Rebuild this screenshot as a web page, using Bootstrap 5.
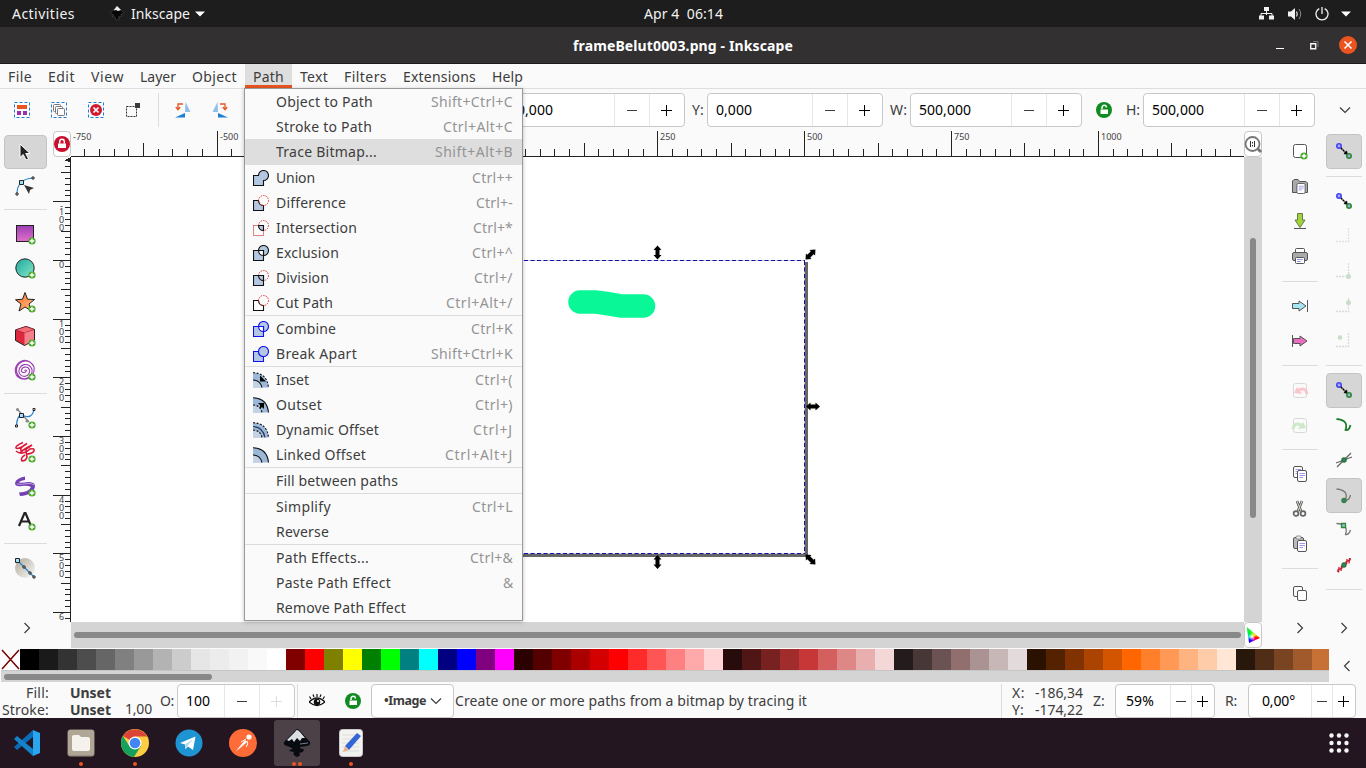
<!DOCTYPE html>
<html lang="en">
<head>
<meta charset="utf-8">
<title>frameBelut0003.png - Inkscape</title>
<link rel="stylesheet" href="https://cdn.jsdelivr.net/npm/bootstrap@5.3.0/dist/css/bootstrap.min.css">
<style>
html,body{width:1366px;height:768px;overflow:hidden}
body{font:14px/20px "Noto Sans","Open Sans",sans-serif;color:#3d3d3d;background:#fafafa}
svg{display:block;flex:none}
.fit{display:inline-block;white-space:pre;flex:none}
.topbar{height:27px;background:#1d1d1d;color:#f2f2f2}
.titlebar{height:37px;background:#323031;border-bottom:1px solid #1c1b1b;color:#fff;font-weight:700}
.menus{height:25px;border-bottom:1px solid #dedede}
.menus>div{padding:3px 0 0 8px;height:24px}
.menus>.open{background:#dedede;border-bottom:3px solid #e95420}
.tools{height:42px}
.vline{width:1px;background:#dcdcdc;flex:none}
.hline{height:1px;background:#dcdcdc}
.spin{height:34px;border:1px solid #c8c8c8;border-radius:4px;background:#fff;color:#000;flex:none}
.spin>span:first-child{flex:1;padding-left:8px}
.spin>i{border-left:1px solid #e6e6e6;height:32px;display:flex;align-items:center;justify-content:center}
.work{height:517px}
.toolbox{width:53px;padding:4px 6px 0 4px}
.toolbox .cell{height:34px}
.toolbox .cell>svg,.gut .cell>svg{margin:-1px 1px 0 0}
.gut .cell>svg{margin-right:0}
.pressed{background:#d6d6d6;border:1px solid #c4c4c4;border-radius:4px}
.gut{width:36px}
.gut .cell{height:35px}
.gap14{height:14px;display:flex;flex-direction:column;justify-content:center}
.gap15{height:15px;display:flex;flex-direction:column;justify-content:center}
.gap14 .hline{margin-top:-1px}
.doc{display:grid;grid-template-columns:18px 1173px 18px;grid-template-rows:26px 465px 26px;width:1209px}
.mini{background:#fff;border:1px solid #c8c8c8;border-radius:4px}
.trough{background:#d4d4d4}
.thumb{background:#888;border-radius:3px}
.rul{font-size:9px;fill:#444}
.pathmenu{position:absolute;left:244px;top:88px;width:279px;height:533px;background:#fafafa;border:1px solid #999;box-shadow:0 1px 4px rgba(0,0,0,.25);z-index:5}
.entry{height:25px;padding:0 9px 0 8px}
.entry .pic{width:16px;margin-right:7px;flex:none}
.entry .key{color:#949494;margin-left:auto}
.entry.hot{background:#dedede;height:26px}
.palette{height:35px}
.swatches{width:1328px;height:22px;overflow:hidden;margin:1px 0 0 1px}
.swatches>b{width:19px;flex:none;height:21px}
.status{height:35px}
.dock{height:50px;background:#241621}
.app{width:54px;height:50px;position:relative}
.app.on::before{content:"";position:absolute;left:4px;top:2px;width:46px;height:46px;border-radius:3px;background:#4d4148}
.app svg{position:relative}
.pips{position:absolute;bottom:2px;left:0;right:0;gap:2px}
.pips i{width:4px;height:4px;border-radius:50%;background:#e95420}
</style>
</head>
<body>
<svg width="0" height="0" class="position-absolute">
<defs>
<linearGradient id="gp" x1="0" y1="0" x2="0" y2="1"><stop stop-color="#9c3fb4"/><stop offset="1" stop-color="#e070c8"/></linearGradient>
<linearGradient id="gt" x1="0" y1="0" x2="1" y2="1"><stop stop-color="#1fa79c"/><stop offset="1" stop-color="#86e8ca"/></linearGradient>
<linearGradient id="go" x1="0" y1="0" x2="1" y2="1"><stop stop-color="#ff6a2c"/><stop offset="1" stop-color="#ffc27d"/></linearGradient>
<linearGradient id="gg" x1="0" y1="0" x2="1" y2="1"><stop stop-color="#b0a898"/><stop offset="1" stop-color="#fafafa"/></linearGradient>
<symbol id="plus" viewBox="0 0 8 8"><circle cx="4" cy="4" r="3.6" fill="#4aa82a"/><path d="M4 1.7V6.3M1.7 4H6.3" stroke="#fff" stroke-width="1.4"/></symbol>
<symbol id="minus" viewBox="0 0 12 12"><path d="M1 6.5H11" stroke="#3d3d3d"/></symbol>
<symbol id="add" viewBox="0 0 12 12"><path d="M0 6.500H11M5.500 1V12" stroke="currentColor"/></symbol>
<symbol id="unlock" viewBox="0 0 16 16"><circle cx="8" cy="8" r="8" fill="#118a22"/><path d="M4.5 7.500H12V12H4.500Z" fill="#fff"/><path d="M6 7V5.500A2.200 2.200 0 0 1 10.400 5.500" fill="none" stroke="#fff" stroke-width="1.500"/></symbol>
<symbol id="snap" viewBox="0 0 18 18"><circle cx="4" cy="4" r="2.200" fill="#aaf" stroke="#44e" stroke-width="1.600"/><path d="M6 6L12 12" stroke="#000" stroke-width="1.500" stroke-dasharray="2 .5"/><path d="M12.800 12.800L8.500 12L12 8.500Z"/><circle cx="14" cy="14" r="2.200" fill="#9ad" stroke="#2d8a35" stroke-width="1.600"/></symbol>
<symbol id="right" viewBox="0 0 10 12"><path d="M2.500 1L7.500 6L2.500 11" fill="none" stroke="#3d3d3d" stroke-width="1.200"/></symbol>
<symbol id="down" viewBox="0 0 12 10"><path d="M1 2.500L6 7.500L11 2.500" fill="none" stroke="#3d3d3d" stroke-width="1.200"/></symbol>
<symbol id="sheet" viewBox="0 0 10 12"><rect x=".5" y=".5" width="9" height="11" rx="1.500" fill="#fff" stroke="#555"/><path d="M2.500 3.500H8M2.500 5.500H8M2.500 7.500H6" stroke="#99e"/></symbol>
<symbol id="flip" viewBox="0 0 16 16"><path d="M0 15.500L10 11V15.500Z" fill="#1b7fd4"/><path d="M10 10L10.500 0L15.500 10Z" fill="#90c0e8"/><path d="M8 2H3V7M.8 5L3 7.800L5.200 5" fill="none" stroke="#e95420" stroke-width="1.300"/></symbol>
</defs>
</svg>

<div class="topbar d-flex align-items-center">
 <span class="fit" style="margin-left:12px" data-w="63">Activities</span>
 <svg width="14" height="15" viewBox="0 0 14 15" style="margin-left:35px"><path d="M7 0L14 7L11 8.500L12 10L8 11L10 13L6 14L5 11L2 10.500L4 9L0 7Z" fill="#070707" stroke="#555" stroke-width=".5"/><path d="M7 0L11 4L8 5L6 4L3.500 4.500Z" fill="#eee"/></svg>
 <span class="fit" style="margin-left:7px" data-w="59">Inkscape</span>
 <svg width="10" height="6" viewBox="0 0 10 6" style="margin-left:5px"><path d="M0 .5H10L5 5.500Z" fill="#fff"/></svg>
 <span class="fit" style="margin-left:439px" data-w="79">Apr 4  06:14</span>
 <div class="d-flex align-items-center ms-auto" style="width:108px">
  <svg width="17" height="15" viewBox="0 0 17 15"><path d="M8.500 4V9M3 10V7.500H14V10" stroke="#f2f2f2" fill="none"/><path d="M6 1H11V5H6ZM1 9.500H6V13.500H1ZM11 9.500H16V13.500H11Z" fill="#f2f2f2"/></svg>
  <svg width="15" height="14" viewBox="0 0 15 14" style="margin-left:12px"><path d="M1 4.500H4L8 1V13L4 9.500H1Z" fill="#f2f2f2"/><path d="M9.500 4.500Q11 7 9.500 9.500" fill="none" stroke="#ddd" stroke-width="1.300"/><path d="M12 2Q15.500 7 12 12" fill="none" stroke="#888"/></svg>
  <svg width="14" height="14" viewBox="0 0 14 14" style="margin-left:13px"><path d="M4.300 1.600A6 6 0 1 0 9.700 1.600M7 0V7" fill="none" stroke="#f2f2f2" stroke-width="1.300"/></svg>
  <svg width="10" height="6" viewBox="0 0 10 6" style="margin-left:12px"><path d="M0 .5H10L5 5.500Z" fill="#fff"/></svg>
 </div>
</div>

<div class="titlebar d-flex align-items-center">
 <span class="fit" style="margin:1px 0 0 573px" data-w="220">frameBelut0003.png - Inkscape</span>
 <div class="d-flex align-items-center ms-auto" style="width:90px">
  <svg width="8" height="10"><path d="M0 8.500H8" stroke="#fff"/></svg>
  <svg width="9" height="9" viewBox="0 0 9 9" style="margin-left:26px"><path d="M.75 2.750H5.750V7.750H.75Z" fill="none" stroke="#fff" stroke-width="1.300"/><path d="M3 .5H8V6" fill="none" stroke="#777"/></svg>
  <svg width="18" height="18" viewBox="0 0 18 18" style="margin-left:20px"><circle cx="9" cy="9" r="9" fill="#e95420"/><path d="M5.500 5.500L12.500 12.500M12.500 5.500L5.500 12.500" stroke="#fff" stroke-width="1.500"/></svg>
 </div>
</div>

<nav class="menus d-flex">
 <div style="width:40px"><span class="fit" data-w="24">File</span></div>
 <div style="width:43px"><span class="fit" data-w="27">Edit</span></div>
 <div style="width:49px"><span class="fit" data-w="33">View</span></div>
 <div style="width:52px"><span class="fit" data-w="36">Layer</span></div>
 <div style="width:61px"><span class="fit" data-w="45">Object</span></div>
 <div style="width:47px" class="open"><span class="fit" data-w="31">Path</span></div>
 <div style="width:44px"><span class="fit" data-w="28">Text</span></div>
 <div style="width:59px"><span class="fit" data-w="43">Filters</span></div>
 <div style="width:89px"><span class="fit" data-w="73">Extensions</span></div>
 <div style="width:47px"><span class="fit" data-w="31">Help</span></div>
</nav>

<div class="tools d-flex align-items-center">
 <div class="d-flex" style="margin-left:14px;gap:21px">
  <svg width="16" height="16"><rect x=".5" y=".5" width="15" height="15" fill="none" stroke="#1b7fd4" stroke-dasharray="3 2"/><path d="M3 3H13V7H3Z" fill="#e95420"/><path d="M3 9H7V13H3ZM9 9H13V13H9Z" fill="#9b2fae"/></svg>
  <svg width="16" height="16"><rect x=".5" y=".5" width="15" height="15" fill="none" stroke="#1b7fd4" stroke-dasharray="3 2"/><g fill="#fff" stroke="#777"><rect x="2.500" y="2.500" width="7" height="7" rx="1"/><rect x="4.500" y="4.500" width="7" height="7" rx="1"/><rect x="6.500" y="6.500" width="7" height="7" rx="1"/></g></svg>
  <svg width="16" height="16"><rect x=".5" y=".5" width="15" height="15" fill="none" stroke="#1b7fd4" stroke-dasharray="3 2"/><circle cx="8" cy="8" r="6" fill="#d01a2e"/><path d="M5.500 5.500L10.500 10.500M10.500 5.500L5.500 10.500" stroke="#fff" stroke-width="1.700"/></svg>
  <svg width="16" height="16"><rect x="1.500" y="4.500" width="10" height="10" fill="none" stroke="#333" stroke-dasharray="2 1"/><path d="M10 1H15V6H10Z" fill="#3a3a3a"/></svg>
 </div>
 <div class="vline" style="height:34px;margin-left:17px"></div>
 <svg width="16" height="16" style="margin-left:16px"><use href="#flip"/></svg>
 <svg width="16" height="16" style="margin-left:21px"><use href="#flip" transform="matrix(-1 0 0 1 16 0)"/></svg>
 <div class="spin d-flex align-items-center ms-auto" style="width:177px"><span><span class="fit" data-w="36">0,000</span></span><i style="width:35px"><svg width="12" height="12"><use href="#minus"/></svg></i><i style="width:35px"><svg width="12" height="12"><use href="#add"/></svg></i></div>
 <span class="fit" style="margin:0 3px 0 7px" data-w="12">Y:</span>
 <div class="spin d-flex align-items-center" style="width:176px"><span><span class="fit" data-w="36">0,000</span></span><i style="width:35px"><svg width="12" height="12"><use href="#minus"/></svg></i><i style="width:35px"><svg width="12" height="12"><use href="#add"/></svg></i></div>
 <span class="fit" style="margin:0 3px 0 7px" data-w="17">W:</span>
 <div class="spin d-flex align-items-center" style="width:172px"><span><span class="fit" data-w="52">500,000</span></span><i style="width:35px"><svg width="12" height="12"><use href="#minus"/></svg></i><i style="width:35px"><svg width="12" height="12"><use href="#add"/></svg></i></div>
 <svg width="16" height="16" style="margin-left:14px"><use href="#unlock"/></svg>
 <span class="fit" style="margin:0 3px 0 14px" data-w="14">H:</span>
 <div class="spin d-flex align-items-center" style="width:172px"><span><span class="fit" data-w="52">500,000</span></span><i style="width:35px"><svg width="12" height="12"><use href="#minus"/></svg></i><i style="width:35px"><svg width="12" height="12"><use href="#add"/></svg></i></div>
 <svg width="12" height="10" style="margin:0 15px 0 24px"><use href="#down"/></svg>
</div>

<div class="work d-flex">
 <div class="toolbox d-flex flex-column">
  <div class="cell pressed d-flex align-items-center justify-content-center"><svg width="14" height="18" viewBox="0 0 14 18"><path d="M2 1V14.500L5.200 11.500L8 17L10.500 15.800L7.700 10.500H12Z" fill="#222" stroke="#fff"/></svg></div>
  <div class="cell d-flex align-items-center justify-content-center"><svg width="22" height="22" viewBox="0 0 22 22"><path d="M3 19Q3 4 19 3" fill="none" stroke="#2a80cc" stroke-width="1.200"/><path d="M2 18H4V20H2ZM18 2H20V4H18Z" fill="#fff" stroke="#222"/><path d="M5.500 5.500H9.500V9.500H5.500Z" fill="#9fe0ff" stroke="#222"/><path d="M10 10L20 13L16 15L15 19Z" fill="#333"/></svg></div>
  <div class="gap14"><div class="hline"></div></div>
  <div class="cell d-flex align-items-center justify-content-center"><svg width="22" height="22"><rect x="2.500" y="2.500" width="17" height="16" fill="url(#gp)" stroke="#222"/><use href="#plus" x="14" y="14" width="8" height="8"/></svg></div>
  <div class="cell d-flex align-items-center justify-content-center"><svg width="22" height="22"><circle cx="11" cy="11" r="9.200" fill="url(#gt)" stroke="#222"/><use href="#plus" x="14" y="14" width="8" height="8"/></svg></div>
  <div class="cell d-flex align-items-center justify-content-center"><svg width="22" height="22"><path d="M11 1.500L13.500 8.200L20.500 8.500L15 13L17 19.500L11 16L5 20L7 13L1.500 8.800L8.500 8.200Z" fill="url(#go)" stroke="#222"/><use href="#plus" x="14" y="14" width="8" height="8"/></svg></div>
  <div class="cell d-flex align-items-center justify-content-center"><svg width="22" height="22"><path d="M1.500 5L12 1.500L20.500 4.500V15L10.500 20.500L1.500 15.500Z" fill="#dd2840" stroke="#222"/><path d="M1.500 5L10.500 8L20.500 4.500L12 1.500Z" fill="#f76b75" stroke="#7b1527" stroke-width=".6"/><path d="M10.500 8L20 5V15L10.500 20Z" fill="#f77f89"/><use href="#plus" x="14" y="14" width="8" height="8"/></svg></div>
  <div class="cell d-flex align-items-center justify-content-center"><svg width="22" height="22"><path d="M10.500 11.500A1.200 1.200 0 0 1 12.500 11.500A2.800 2.800 0 0 1 7.300 12A4.200 4.200 0 0 1 15.500 11A5.300 5.300 0 0 1 5 13A6.600 6.600 0 0 1 17.800 10A7.600 7.600 0 0 1 3 14A9 9 0 0 1 20 8Q21 15 15 19Q9 22 4 18Q1 15 1.300 10Q3 3 9 1.500Q16 .5 20 8" fill="none" stroke="#9a3fb0" stroke-width="1.100"/><use href="#plus" x="14" y="14" width="8" height="8"/></svg></div>
  <div class="gap14"><div class="hline"></div></div>
  <div class="cell d-flex align-items-center justify-content-center"><svg width="22" height="22"><path d="M3 2L15 15" stroke="#888" stroke-width="1.500"/><circle cx="3.500" cy="2.500" r="1.500" fill="#888"/><circle cx="13" cy="14" r="1.500" fill="#888"/><path d="M2.500 19Q3 8 8 8Q18 13 20 2.500" fill="none" stroke="#2a80cc" stroke-width="1.300"/><path d="M1.500 18H3.500V20H1.500ZM19 1.500H21V3.500H19Z" fill="#fff" stroke="#222"/><path d="M5.500 6.500H9.500V10.500H5.500Z" fill="#9fe0ff" stroke="#222"/><use href="#plus" x="14" y="14" width="8" height="8"/></svg></div>
  <div class="cell d-flex align-items-center justify-content-center"><svg width="22" height="22"><path d="M9 1.500Q1 5 2 7Q4 9 13 2.500Q5 7 7 9.500Q11 10 18 4M18 4Q8 9 6 12M2 10Q8 15 16 8Q21 7 20 10Q18 13 12 13M12 7Q12 12 13 16Q12 20 8 20Q6 17 11 14" fill="none" stroke="#dc1839" stroke-width="1.600"/><use href="#plus" x="14" y="14" width="8" height="8"/></svg></div>
  <div class="cell d-flex align-items-center justify-content-center"><svg width="22" height="22"><path d="M11 1.500V5Q5 6 5 7.500Q8 8 14 7Q21 7 21 11Q20 20 6 21L5 17.500Q15 17 17 12Q14 10 8 11Q1 12 1 8Q2 3 11 1.500Z" fill="#7540b5"/><path d="M3 9Q7 10 13 8.500Q18 8 20 10" stroke="#bba0dc" fill="none"/><use href="#plus" x="14" y="14" width="8" height="8"/></svg></div>
  <div class="cell d-flex align-items-center justify-content-center"><svg width="22" height="22"><path d="M5 17L10.500 4H11.500L17 17M7 12.500H15" fill="none" stroke="#222" stroke-width="2.200"/><use href="#plus" x="14" y="14" width="8" height="8"/></svg></div>
  <div class="gap14"><div class="hline"></div></div>
  <div class="cell d-flex align-items-center justify-content-center"><svg width="22" height="22"><circle cx="11" cy="11" r="10" fill="url(#gg)"/><path d="M4 4L20 20" stroke="#2a80cc" stroke-width="1.300"/><path d="M1.500 1.500H5.500V5.500H1.500Z" fill="#9fe0ff" stroke="#222"/><path d="M9 9H11V11H9ZM15 15H17V17H15ZM19 19H21V21H19Z" fill="#fff" stroke="#222"/></svg></div>
  <svg width="10" height="12" style="margin:37px 0 0 18px"><use href="#right"/></svg>
 </div>

 <div class="doc">
  <div class="mini d-flex align-items-center justify-content-center"><svg width="16" height="16"><circle cx="8" cy="8" r="8" fill="#c8102e"/><path d="M4 7.500H12V12H4Z" fill="#fff"/><path d="M5.700 7.500V5.500A2.300 2.300 0 0 1 10.300 5.500V7.500" fill="none" stroke="#fff" stroke-width="1.400"/></svg></div>
  <svg id="hr" width="1173" height="26" class="rul" shape-rendering="crispEdges"></svg>
  <div class="mini d-flex align-items-center justify-content-center"><svg width="18" height="20" viewBox="0 0 18 20"><path d="M13 14L17 18" stroke="#777" stroke-width="3"/><circle cx="8.500" cy="10" r="7" fill="#fff" stroke="#777" stroke-width="1.800"/><path d="M6.500 7V13M10.500 7V13M8.500 8V9.500M8.500 11V12.500" stroke="#333"/></svg></div>
  <svg id="vr" width="18" height="465" class="rul" shape-rendering="crispEdges"></svg>
  <svg width="1173" height="465" viewBox="71 157 1173 465"><path d="M71 157H1244V622H71Z" fill="#fff"/>
   <path d="M805 262H808V557H511V554H805Z" fill="#666"/>
   <path d="M511 260.500H805.500M804.500 261V553.500M511 553.500H805" stroke="#ccc" fill="none"/>
   <path d="M511 260.500H805M804.500 261V553.500M511 553.500H805" stroke="#11a" stroke-dasharray="4 2.500" fill="none"/>
   <path d="M580 302H595Q605 303 621 306H643.500" fill="none" stroke="#0af797" stroke-width="23.500" stroke-linecap="round" stroke-linejoin="round"/>
   <defs><path id="ar" d="M0 -7L4 -2.500H2V2.500H4L0 7L-4 2.500H-2V-2.500H-4Z"/></defs>
   <use href="#ar" x="657.500" y="252.500"/><use href="#ar" x="657.500" y="562"/>
   <use href="#ar" transform="translate(813 406.500) rotate(90)"/><use href="#ar" transform="translate(810.500 254.500) rotate(45)"/><use href="#ar" transform="translate(810.500 559.500) rotate(-45)"/>
  </svg>
  <div class="trough d-flex justify-content-center"><div class="thumb" style="width:6px;height:280px;margin-top:81px"></div></div>
  <div></div>
  <div class="trough d-flex align-items-center"><div class="thumb" style="width:1167px;height:6px;margin-left:3px"></div></div>
  <div class="mini" style="overflow:hidden"><div style="width:14px;height:16px;margin:4px 0 0 1px;clip-path:polygon(5% 0,100% 68%,22% 100%);background:radial-gradient(circle at 42% 62%,#fff 0,transparent 28%),conic-gradient(from 0deg at 42% 62%,#7f3,#fd0 17%,#f00 28%,#f0a 38%,#50f 50%,#00f 60%,#0dd 75%,#0e3 90%,#3f3)"></div></div>
 </div>

 <div class="gut" style="margin-left:20px;padding-top:3px">
  <div class="cell d-flex align-items-center justify-content-center"><svg width="18" height="18"><rect x="2.500" y="2.500" width="13" height="13" rx="2" fill="#fff" stroke="#555"/><use href="#plus" x="9" y="10" width="8" height="8"/></svg></div>
  <div class="cell d-flex align-items-center justify-content-center"><svg width="18" height="18" style="margin-top:1px"><path d="M1.500 14.500V3L3 1.500H7L8.500 3.500H15L16.500 5V14.500Z" fill="#aaa" stroke="#555"/><use href="#sheet" x="5" y="5" width="10" height="11"/></svg></div>
  <div class="cell d-flex align-items-center justify-content-center"><svg width="18" height="18"><path d="M6.500 1.500H11.500V8H14L9 15.500L4 8H6.500Z" fill="#a0d43a" stroke="#687a45"/><path d="M3 16.500H15" stroke="#555"/></svg></div>
  <div class="cell d-flex align-items-center justify-content-center"><svg width="18" height="18"><rect x="4.500" y="1.500" width="9" height="6" rx="1" fill="#fff" stroke="#555"/><rect x="1.500" y="5.500" width="15" height="8" rx="1.500" fill="#aaa" stroke="#555"/><rect x="4.500" y="10.500" width="9" height="6" rx="1" fill="#fff" stroke="#555"/><path d="M6 12.500H12M6 14.500H10" stroke="#99e"/></svg></div>
  <div class="gap15"><div class="hline"></div></div>
  <div class="cell d-flex align-items-center justify-content-center"><svg width="18" height="18"><path d="M1.500 6.500H8V4L15 9L8 14V11.500H1.500Z" fill="#a6e3f3" stroke="#555"/><path d="M16.500 3V15" stroke="#555"/></svg></div>
  <div class="cell d-flex align-items-center justify-content-center"><svg width="18" height="18"><path d="M2.500 6.500H9V4L16 9L9 14V11.500H2.500Z" fill="#e86fc0" stroke="#555"/><path d="M1.500 3V15" stroke="#555"/></svg></div>
  <div class="gap14"><div class="hline"></div></div>
  <div class="cell d-flex align-items-center justify-content-center"><svg width="18" height="18"><rect x="2.500" y="2.500" width="13" height="14" rx="2" fill="#fafafa" stroke="#d8d8d8"/><path d="M16 13Q15 6 8 9" fill="none" stroke="#f9c6cc" stroke-width="3"/><path d="M3 12L6 6L11 13Z" fill="#f9c6cc"/></svg></div>
  <div class="cell d-flex align-items-center justify-content-center"><svg width="18" height="18"><rect x="2.500" y="2.500" width="13" height="14" rx="2" fill="#fafafa" stroke="#d8d8d8"/><path d="M2 13Q3 6 10 9" fill="none" stroke="#cde8c6" stroke-width="3"/><path d="M15 12L12 6L7 13Z" fill="#cde8c6"/></svg></div>
  <div class="gap14"><div class="hline"></div></div>
  <div class="cell d-flex align-items-center justify-content-center"><svg width="18" height="18"><use href="#sheet" x="2" y="1" width="10" height="12"/><use href="#sheet" x="6" y="5" width="10" height="12"/></svg></div>
  <div class="cell d-flex align-items-center justify-content-center"><svg width="18" height="18"><path d="M6 1L10 11M11 1L7 11" stroke="#555" stroke-width="2.600"/><path d="M6 1L10 11M11 1L7 11" stroke="#ddd8cc" stroke-width="1"/><circle cx="5" cy="13.500" r="2.400" fill="none" stroke="#666" stroke-width="1.700"/><circle cx="12" cy="13.500" r="2.400" fill="none" stroke="#666" stroke-width="1.700"/></svg></div>
  <div class="cell d-flex align-items-center justify-content-center"><svg width="18" height="18"><rect x="2.500" y="2.500" width="10" height="11" rx="1.500" fill="#bbb" stroke="#555"/><rect x="5" y="1" width="5" height="3" rx="1" fill="#eee" stroke="#777" stroke-width=".8"/><use href="#sheet" x="6" y="5" width="10" height="12"/></svg></div>
  <div class="gap14"><div class="hline"></div></div>
  <div class="cell d-flex align-items-center justify-content-center"><svg width="18" height="18" style="margin-top:1px"><rect x="2.500" y="1.500" width="9" height="10" rx="1.500" fill="#fafafa" stroke="#555"/><rect x="6.500" y="5.500" width="9" height="10" rx="1.500" fill="#fff" stroke="#555"/></svg></div>
  <div class="cell d-flex align-items-center justify-content-center"><svg width="10" height="12"><use href="#right"/></svg></div>
 </div>

 <div class="gut" style="margin-left:8px;padding-top:3px">
  <div class="cell pressed d-flex align-items-center justify-content-center"><svg width="18" height="18"><use href="#snap"/></svg></div>
  <div class="gap15"><div class="hline"></div></div>
  <div class="cell d-flex align-items-center justify-content-center"><svg width="18" height="18"><use href="#snap"/></svg></div>
  <div class="cell d-flex align-items-center justify-content-center"><svg width="18" height="18"><path d="M1 14.500H13.500V1" fill="none" stroke="#dbe5dc" stroke-width="1.300" stroke-dasharray="2 1"/></svg></div>
  <div class="cell d-flex align-items-center justify-content-center"><svg width="18" height="18"><path d="M1 14.500H13.500V1" fill="none" stroke="#d6dcd7" stroke-width="1.300" stroke-dasharray="2 1"/><circle cx="13.500" cy="14.500" r="2.500" fill="#c8decc"/></svg></div>
  <div class="cell d-flex align-items-center justify-content-center"><svg width="18" height="18"><path d="M1 14.500H13.500V1" fill="none" stroke="#d6dcd7" stroke-width="1.300" stroke-dasharray="2 1"/><circle cx="13.500" cy="5.500" r="2.500" fill="#c8decc"/></svg></div>
  <div class="cell d-flex align-items-center justify-content-center"><svg width="18" height="18"><path d="M1 14.500H13.500V1" fill="none" stroke="#d6dcd7" stroke-width="1.300" stroke-dasharray="2 1"/><circle cx="5" cy="5.500" r="2.300" fill="#c8decc"/></svg></div>
  <div class="gap14"><div class="hline"></div></div>
  <div class="cell pressed d-flex align-items-center justify-content-center"><svg width="18" height="18"><use href="#snap"/></svg></div>
  <div class="cell d-flex align-items-center justify-content-center"><svg width="18" height="18"><path d="M1.500 3Q14 4 10.500 14Q14 15 15.500 9" fill="none" stroke="#1d7d2b" stroke-width="1.800"/></svg></div>
  <div class="cell d-flex align-items-center justify-content-center"><svg width="18" height="18"><path d="M1 12L17 6M2 16L16 2" stroke="#666" stroke-width="1.300"/><circle cx="9" cy="9" r="2" fill="#569" stroke="#1d7d2b" stroke-width="1.500"/></svg></div>
  <div class="cell pressed d-flex align-items-center justify-content-center"><svg width="18" height="18"><path d="M1.500 3Q14 4 10.500 14Q14 15 15.500 9" fill="none" stroke="#777" stroke-width="1.300"/><circle cx="9" cy="14.500" r="2" fill="#569" stroke="#2d8a35" stroke-width="1.500"/></svg></div>
  <div class="cell d-flex align-items-center justify-content-center"><svg width="18" height="18"><path d="M1.500 2.500Q14 3 10.500 13.500Q14 14 15.500 9" fill="none" stroke="#777" stroke-width="1.300"/><path d="M6.500 2.500H10.500V6.500H6.500Z" fill="#9bd" stroke="#2d8a35" stroke-width="1.300"/></svg></div>
  <div class="cell d-flex align-items-center justify-content-center"><svg width="18" height="18"><path d="M2 16L16 2" stroke="#666"/><path d="M4 11L3.500 16.500M6.500 9.500L6 15M12 3L11.500 8.500M14.500 2L14 7.500M2 14.500L8 11.500M10 6.500L16 3.500" stroke="#d01a2e" stroke-width="1.300"/><circle cx="9" cy="9" r="2" fill="#569" stroke="#1d7d2b" stroke-width="1.300"/></svg></div>
  <div class="gap14"><div class="hline"></div></div>
  <div class="cell d-flex align-items-center justify-content-center" style="margin-top:14px"><svg width="10" height="12"><use href="#right"/></svg></div>
 </div>
</div>

<div class="palette d-flex">
 <div>
  <div class="swatches d-flex" id="sw"><svg width="19" height="21"><path d="M0 0H19V21H0Z" fill="#fff"/><path d="M1 1L18 20M18 1L1 20" stroke="#700" stroke-width="1.500"/></svg></div>
  <div class="trough d-flex align-items-center" style="height:12px;width:1328px;margin-left:1px;margin-top:-1px;border-top:1px solid #c6c6c6"><div class="thumb" style="width:208px;height:6px;margin-left:3px"></div></div>
 </div>
 <svg width="10" height="12" style="margin:12px 0 0 13px"><use href="#right" transform="matrix(-1 0 0 1 10 0)"/></svg>
</div>

<div class="status d-flex align-items-center">
 <div class="text-end" style="width:49px;line-height:17px"><span class="fit" data-w="23">Fill:</span><br><span class="fit" data-w="47">Stroke:</span></div>
 <div class="fw-bold" style="width:56px;padding-left:21px;line-height:17px"><span class="fit" data-w="41">Unset</span><br><span class="fit" data-w="41">Unset</span></div>
 <span class="fit" style="margin:17px 0 0 20px" data-w="27">1,00</span>
 <span class="fit" style="margin:0 3px 0 8px" data-w="14">O:</span>
 <div class="spin d-flex align-items-center" style="width:118px"><span><span class="fit" data-w="24">100</span></span><i style="width:35px"><svg width="12" height="12"><use href="#minus"/></svg></i><i style="width:35px;color:#ddd"><svg width="12" height="12"><use href="#add"/></svg></i></div>
 <div class="vline" style="height:34px;margin-left:2px"></div>
 <svg width="16" height="16" viewBox="0 0 16 16" style="margin-left:11px"><path d="M0 9Q8 1 16 9Q8 16 0 9Z" fill="#fff" stroke="#111" stroke-width="1.300"/><circle cx="8" cy="9" r="3.300" fill="#111"/><path d="M2 6L.5 3.500M5 4L4 1.500M8 4V1M11 4L12 1.500M14 6L15.500 3.500" stroke="#111" stroke-width="1.200"/><circle cx="9" cy="8" r="1" fill="#fff"/></svg>
 <svg width="16" height="16" style="margin-left:20px"><use href="#unlock"/></svg>
 <div class="spin d-flex align-items-center fw-bold" style="width:83px;margin-left:10px;color:#3d3d3d;font-size:12.5px;padding-left:4px"><span><span class="fit" data-w="42">•Image</span></span><svg width="12" height="10" style="margin-right:11px"><use href="#down"/></svg></div>
 <span class="fit" style="margin-left:1px" data-w="352">Create one or more paths from a bitmap by tracing it</span>
 <div class="vline ms-auto" style="height:34px"></div>
 <div style="margin-left:10px;line-height:17px"><span class="fit" data-w="13">X:</span><br><span class="fit" data-w="12">Y:</span></div>
 <div style="margin-left:10px;line-height:17px"><span class="fit" data-w="48">-186,34</span><br><span class="fit" data-w="48">-174,22</span></div>
 <span class="fit" style="margin:0 10px 0 10px" data-w="12">Z:</span>
 <div class="spin d-flex align-items-center" style="width:100px"><span style="padding-left:10px"><span class="fit" data-w="28">59%</span></span><i style="width:21px"><svg width="12" height="12"><use href="#minus"/></svg></i><i style="width:23px"><svg width="12" height="12"><use href="#add"/></svg></i></div>
 <span class="fit" style="margin:0 11px 0 10px" data-w="12">R:</span>
 <div class="spin d-flex align-items-center" style="width:108px;margin-right:10px"><span style="padding-left:13px"><span class="fit" data-w="33">0,00°</span></span><i style="width:21px"><svg width="12" height="12"><use href="#minus"/></svg></i><i style="width:23px"><svg width="12" height="12"><use href="#add"/></svg></i></div>
</div>

<div class="dock d-flex">
 <div class="app d-flex align-items-center justify-content-center"><svg width="28" height="28" viewBox="0 0 28 28"><path d="M1 18L20 1V8L4 21Z" fill="#0b6bb5"/><path d="M1 10L4 7L20 20V27Z" fill="#1583cc"/><path d="M20 1L27 4V24L20 27Z" fill="#2aa5ef"/></svg></div>
 <div class="app d-flex align-items-center justify-content-center"><svg width="28" height="28"><rect x=".5" y=".5" width="27" height="27" rx="3" fill="#9c9281"/><rect x="1" y="1" width="26" height="25" rx="3" fill="#b0a695"/><path d="M5 8Q5 6 7 6H12L14 8H21Q23 8 23 10V20Q23 22 21 22H7Q5 22 5 20Z" fill="#f5f2ed"/></svg><div class="pips d-flex justify-content-center"><i></i></div></div>
 <div class="app d-flex align-items-center justify-content-center"><svg width="28" height="28" viewBox="0 0 28 28"><circle cx="14" cy="14" r="14" fill="#ffcd42"/><path d="M14 14L1.900 7A14 14 0 0 1 26.100 7.500H14Z" fill="#db4437"/><path d="M1.900 7A14 14 0 0 0 13 28L20 17L9 18Z" fill="#14a05d"/><circle cx="14" cy="14" r="6.500" fill="#fff"/><circle cx="14" cy="14" r="5.300" fill="#4285f4"/></svg><div class="pips d-flex justify-content-center"><i></i></div></div>
 <div class="app d-flex align-items-center justify-content-center"><svg width="28" height="28" viewBox="0 0 28 28"><circle cx="14" cy="14" r="13.500" fill="#1f94d2"/><path d="M5 14L20.500 7.500L18 21L13 17.500L10.500 20L10 15.500Z" fill="#fff"/><path d="M10 15.500L18 10L12.500 17L10.500 20Z" fill="#b8d8ec"/></svg></div>
 <div class="app d-flex align-items-center justify-content-center"><svg width="28" height="28" viewBox="0 0 28 28"><circle cx="14" cy="14" r="14" fill="#ff6c37"/><circle cx="20" cy="8" r="2.600" fill="#fff"/><path d="M7 22L16 11L18 13L10 20Z" fill="#fff"/><path d="M12 13L17 10M18 12Q20 15 17 18" stroke="#fff" fill="none"/></svg></div>
 <div class="app on d-flex align-items-center justify-content-center"><svg width="28" height="28" viewBox="0 0 28 28"><path d="M14 0Q16 0 18 3L27 13Q28 16 24 17L17 18Q17 20 21 20L20 23L16 24Q19 26 14 28Q9 26 11 23L6 22Q7 20 10 20Q8 18 4 17Q0 16 1 13L11 3Q13 0 14 0Z" fill="#080c12"/><path d="M14 1Q15 1 17 3L22 9L19 9L17 12L14 9L11 13L9 10L6 12L4 11L12 3Q13 1 14 1Z" fill="#dde0e3"/><path d="M17 15L25 14" stroke="#718091"/></svg><div class="pips d-flex justify-content-center"><i></i><i></i></div></div>
 <div class="app d-flex align-items-center justify-content-center"><svg width="28" height="28" viewBox="0 0 28 28"><rect x="2.500" y=".5" width="23" height="27" rx="3" fill="#f2f2f0" stroke="#c8c8c8"/><path d="M5 6H22M5 10H22M5 14H22M5 18H22M5 22H22" stroke="#ddd"/><path d="M8 17L20 4L24 7L12 21Z" fill="#3465d6"/><path d="M8 17L12 21L6 23Z" fill="#e9b48b"/></svg><div class="pips d-flex justify-content-center"><i></i></div></div>
 <svg width="20" height="20" viewBox="0 0 20 20" class="ms-auto my-auto" style="margin-right:17px"><g fill="#f5f5f5"><circle cx="2.500" cy="2.500" r="2.200"/><circle cx="10" cy="2.500" r="2.200"/><circle cx="17.500" cy="2.500" r="2.200"/><circle cx="2.500" cy="10" r="2.200"/><circle cx="10" cy="10" r="2.200"/><circle cx="17.500" cy="10" r="2.200"/><circle cx="2.500" cy="17.500" r="2.200"/><circle cx="10" cy="17.500" r="2.200"/><circle cx="17.500" cy="17.500" r="2.200"/></g></svg>
</div>

<div class="pathmenu" id="pm"></div>

<script src="https://cdn.jsdelivr.net/npm/bootstrap@5.3.0/dist/js/bootstrap.bundle.min.js"></script>
<script>
// Path menu: label, label width, shortcut, shortcut width, icon
const box='M.5 5.500H10.500V15.500H.5Z', ci='<circle cx="10.500" cy="5.500" r="5" ';
const dif='M.5 5.500H5.500Q6 10.500 10.500 10.500V15.500H.5Z', ov='M5.500 5.500H10.500V10.500Q6 10.500 5.500 5.500Z';
const ink='stroke="#111" stroke-width="1.100"', blue='stroke="#11e" stroke-width="1.100"', pale='fill="#b3c7e2"';
const red=ci+'fill="none" stroke="#d22" stroke-width=".9" stroke-dasharray="1.500 1"/>';
const arc=(o,i,x)=>`<path d="M0 .8Q14 1 15.500 15.500H0Z" fill="#9cb8d8"/><path d="M0 8Q7 8 9 15.500H0Z" fill="#c3d3e6"/><path d="M0 .8Q14 1 15.500 15.500" fill="none" ${ink} ${o}/><path d="M0 8Q7 8 9 15.500" fill="none" ${ink} ${i}/>${x}`;
const dash='stroke-dasharray="2 1.500"';
const ic={
 u:`<path d="M.5 5.500H5.500A5 5 0 1 1 10.500 10.500V15.500H.5Z" ${pale} ${ink}/>`,
 d:`<path d="${dif}" ${pale} ${ink}/>${red}`,
 i:`<path d="M.5 5.500V15.500H10.500V11M.5 5.500H5" fill="none" stroke="#c11" stroke-dasharray="1 1"/>${red}<path d="${ov}" ${pale} ${ink}/>`,
 e:`${ci}${pale} ${ink}/><path d="${box}" ${pale} ${ink}/><path d="${ov}" fill="#fff" ${ink}/>`,
 v:`<path d="${box}" ${pale} ${ink}/>${red}<path d="${ov}" ${pale} ${ink}/>`,
 c:`<path d="${dif}" fill="#fff" ${ink}/>${red}`,
 m:`${ci}${pale} ${blue}/><path d="${box}" ${pale} ${blue}/><path d="${ov}" fill="#fff" ${blue}/>`,
 b:`<path d="${dif}" ${pale} ${blue}/>${ci}${pale} ${blue}/>`,
 n:arc(dash,'','<path d="M7 3.500V9.500H13Z"/>'),
 o:arc('',dash,'<path d="M5 6H11V12L9 10L7 12V8Z"/>'),
 y:arc(dash,dash,'<path d="M0 4.500Q10 5 12 15.500" fill="none" stroke="#235" stroke-width="1.100"/>'),
 l:arc('','','')
};
const rows=[["Object to Path",97,"Shift+Ctrl+C",82],["Stroke to Path",96,"Ctrl+Alt+C",70],["Trace Bitmap...",101,"Shift+Alt+B",78,"hot"],
["Union",39,"Ctrl++",41,"u"],["Difference",70,"Ctrl+-",37,"d"],["Intersection",81,"Ctrl+*",40,"i"],["Exclusion",63,"Ctrl+^",41,"e"],["Division",53,"Ctrl+/",39,"v"],["Cut Path",57,"Ctrl+Alt+/",67,"c"],0,
["Combine",60,"Ctrl+K",42,"m"],["Break Apart",81,"Shift+Ctrl+K",82,"b"],0,
["Inset",33,"Ctrl+(",38,"n"],["Outset",46,"Ctrl+)",38,"o"],["Dynamic Offset",103,"Ctrl+J",40,"y"],["Linked Offset",90,"Ctrl+Alt+J",68,"l"],0,
["Fill between paths",122],0,["Simplify",55,"Ctrl+L",41],["Reverse",53],0,["Path Effects...",93,"Ctrl+&",43],["Paste Path Effect",115,"&",10],["Remove Path Effect",130]];
const esc=s=>s.replace(/&/g,'&amp;');
pm.innerHTML=rows.map(r=>r?`<div class="entry d-flex align-items-center ${r[4]=='hot'?'hot':''}"><div class="pic">${ic[r[4]]?`<svg width="16" height="16">${ic[r[4]]}</svg>`:''}</div><span class="fit" data-w="${r[1]}">${r[0]}</span>${r[2]?`<span class="fit key" data-w="${r[3]}">${esc(r[2])}</span>`:''}</div>`:'<div class="hline"></div>').join('');

// Rulers
let h='<path d="M0 25H1173V26H0Z" fill="#222"/>';
for(let n=0;n<=79;n++){const x=Math.floor(-.9+n*14.69),t=n%10==0?0:n%5==0?12:18;h+=`<path d="M${x} ${t}h1V26h-1z" fill="#222"/>`;if(n%10==0)h+=`<text x="${x+3}" y="9">${-750+n*25}</text>`}
hr.innerHTML=h;
let v='<path d="M17 0H18V465H17Z" fill="#222"/><path d="M12 3L18 0V6Z" fill="#222"/>';
for(let n=-17;n<=61;n++){const y=Math.round(103+n*5.867),t=n%10==0?0:n%5==0?8:12;v+=`<path d="M${t} ${y}H18v1H${t}z" fill="#222"/>`;if(n%10==0&&n>=-10)String(n*10).slice(0,n==60?1:4).split('').forEach((c,k)=>{v+=`<text x="8.500" text-anchor="middle" y="${y+8+(n<0?(k?k*8-2:0):k*8)}">${c}</text>`})}
vr.innerHTML=v;

// Palette
const cols="000000 1a1a1a 333333 4d4d4d 666666 808080 999999 b3b3b3 cccccc e6e6e6 ececec f2f2f2 f9f9f9 ffffff 800000 ff0000 808000 ffff00 008000 00ff00 008080 00ffff 000080 0000ff 800080 ff00ff 2b0000 550000 800000 aa0000 d40000 ff0000 ff2a2a ff5555 ff8080 ffaaaa ffd5d5 280b0b 501616 782121 a02c2c c83737 d35f5f de8787 e9afaf f4d7d7 241c1c 483737 6c5353 916f6f ac9393 c8b7b7 e3dbdb 2b1100 552200 803300 aa4400 d45500 ff6600 ff7f2a ff9955 ffb380 ffccaa ffe6d5 28170b 502d16 784421 a05a2c c87137".split(' ');
sw.insertAdjacentHTML('beforeend',cols.map(c=>`<b style="background:#${c}"></b>`).join(''));

// Track each label to its set width
document.querySelectorAll('.fit').forEach(e=>{const w=+e.dataset.w,n=e.textContent.length;e.style.letterSpacing=((w-e.getBoundingClientRect().width)/n).toFixed(3)+'px'});
</script>
</body>
</html>
